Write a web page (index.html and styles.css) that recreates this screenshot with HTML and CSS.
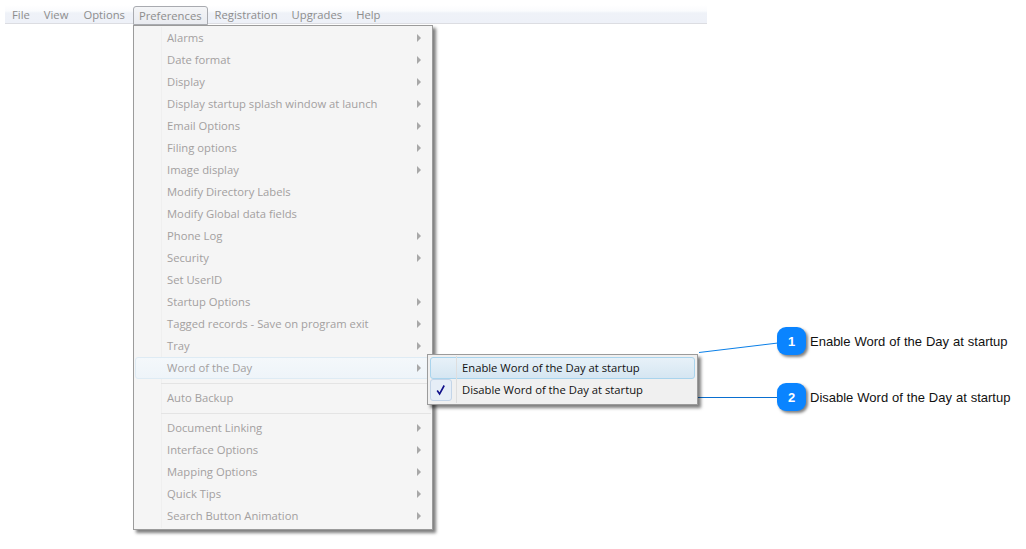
FILE: index.html
```
<!DOCTYPE html>
<html lang="en">
<head>
<meta charset="utf-8">
<title>Preferences menu</title>
<link rel="stylesheet" href="styles.css">
</head>
<body>
<div class="stage">
  <nav class="menubar">
    <span class="bar-item">File</span>
    <span class="bar-item bar-view">View</span>
    <span class="bar-item">Options</span>
    <span class="bar-item bar-active">Preferences</span>
    <span class="bar-item">Registration</span>
    <span class="bar-item">Upgrades</span>
    <span class="bar-item">Help</span>
  </nav>

  <div class="menu main-menu">
    <div class="row has-sub">Alarms</div>
    <div class="row has-sub">Date format</div>
    <div class="row has-sub">Display</div>
    <div class="row has-sub">Display startup splash window at launch</div>
    <div class="row has-sub">Email Options</div>
    <div class="row has-sub">Filing options</div>
    <div class="row has-sub">Image display</div>
    <div class="row">Modify Directory Labels</div>
    <div class="row">Modify Global data fields</div>
    <div class="row has-sub">Phone Log</div>
    <div class="row has-sub">Security</div>
    <div class="row">Set UserID</div>
    <div class="row has-sub">Startup Options</div>
    <div class="row has-sub">Tagged records - Save on program exit</div>
    <div class="row has-sub">Tray</div>
    <div class="row has-sub row-hover">Word of the Day</div>
    <div class="sep"></div>
    <div class="row">Auto Backup</div>
    <div class="sep"></div>
    <div class="row has-sub">Document Linking</div>
    <div class="row has-sub">Interface Options</div>
    <div class="row has-sub">Mapping Options</div>
    <div class="row has-sub">Quick Tips</div>
    <div class="row has-sub">Search Button Animation</div>
  </div>

  <div class="menu sub-menu">
    <div class="row row-on">Enable Word of the Day at startup</div>
    <div class="row row-plain">
      <span class="check"><svg width="10" height="12" viewBox="0 0 10 12"><path d="M1.2 6.5 L3.6 10 L8.2 1.5" fill="none" stroke="#10108a" stroke-width="1.6"/></svg></span>
      Disable Word of the Day at startup
    </div>
  </div>

  <svg class="leaders" width="1026" height="549" viewBox="0 0 1026 549">
    <path d="M699 352.5 L778 343" stroke="#0a7fe8" stroke-width="1" fill="none"/>
    <path d="M697 397.5 L778 397.5" stroke="#0a6fd0" stroke-width="1" fill="none"/>
  </svg>

  <div class="callout callout-one">
    <span class="bubble">1</span>
    <span class="callout-text">Enable Word of the Day at startup</span>
  </div>
  <div class="callout callout-two">
    <span class="bubble">2</span>
    <span class="callout-text">Disable Word of the Day at startup</span>
  </div>
</div>
</body>
</html>
```

FILE: styles.css
```
html, body {
  margin: 0;
  padding: 0;
  background: #fff;
}
.stage {
  position: relative;
  width: 1026px;
  height: 549px;
  overflow: hidden;
  font-family: "Open Sans", "Noto Sans", sans-serif;
  font-size: 11.25px;
}
.menubar {
  position: absolute;
  left: 5px;
  top: 5px;
  width: 702px;
  height: 19px;
  box-sizing: border-box;
  display: flex;
  align-items: stretch;
  background: linear-gradient(#ffffff 0, #fafbfd 6px, #eff2f8 8px, #eef1f8 17px);
  border-bottom: 1px solid #dcdde2;
  color: #8d8d8d;
}
.bar-item {
  padding: 0 7px;
  line-height: 19px;
  white-space: nowrap;
}
.bar-view {
  padding-right: 8px;
}
.bar-active {
  position: relative;
  height: 19px;
  box-sizing: border-box;
  line-height: 17px;
  padding: 0 5px;
  margin: 1px 0 0 1px;
  border: 1px solid #a9abb0;
  border-radius: 3px 3px 0 0;
  background: linear-gradient(#f4f5f7, #e9ebf0);
  z-index: 3;
}
.menu {
  position: absolute;
  box-sizing: border-box;
  border: 1px solid #9b9b9b;
  box-shadow: 3px 3px 3px rgba(0, 0, 0, .5);
  background: #f5f5f5;
}
.main-menu {
  left: 133px;
  top: 25px;
  width: 300px;
  height: 505px;
  padding: 1px 1px 0;
  color: #a3a0a0;
  z-index: 1;
}
.main-menu::before,
.sub-menu::before {
  content: "";
  position: absolute;
  left: 27px;
  top: 1px;
  bottom: 1px;
  border-left: 1px solid #efefef;
}
.row {
  position: relative;
  height: 22px;
  line-height: 21px;
  padding-left: 32px;
  box-sizing: border-box;
  white-space: nowrap;
}
.has-sub::after {
  content: "";
  position: absolute;
  right: 10px;
  top: 7px;
  border-left: 4px solid #a8a8a8;
  border-top: 4px solid transparent;
  border-bottom: 4px solid transparent;
}
.row-hover {
  margin-right: -5px;
  background: linear-gradient(#f4f8fb, #eef4f9);
  border: 1px solid #deebf4;
  border-radius: 3px;
  line-height: 19px;
  padding-left: 31px;
}
.row-hover::after {
  right: 14px;
  top: 6px;
}
.sep {
  height: 8px;
  margin-left: 26px;
  box-sizing: border-box;
  border-bottom: 1px solid #e4e4e4;
  border-top: 3px solid transparent;
  position: relative;
  top: -3px;
}
.sub-menu {
  left: 427px;
  top: 354px;
  width: 271px;
  height: 51px;
  padding: 2px 2px 0;
  background: #f0f0f0;
  color: #111;
  z-index: 2;
}
.sub-menu::before {
  left: 28px;
  z-index: 2;
  border-left-color: #dedede;
}
.sub-menu .row {
  padding-left: 32px;
}
.row-on {
  background: linear-gradient(#e7f1f8, #d5e6f2);
  border: 1px solid #a9d4ed;
  border-radius: 3px;
  line-height: 20px;
}
.sub-menu .row-on {
  padding-left: 31px;
}
.check {
  position: absolute;
  left: 0;
  top: 0;
  width: 22px;
  height: 22px;
  box-sizing: border-box;
  display: flex;
  align-items: center;
  justify-content: center;
  background: #e6eef7;
  border: 1px solid #c4d5e8;
  border-radius: 3px;
}
.leaders {
  position: absolute;
  left: 0;
  top: 0;
  z-index: 0;
}
.callout {
  position: absolute;
  left: 777px;
  display: flex;
  align-items: center;
  gap: 4px;
  z-index: 3;
}
.callout-one { top: 327px; }
.callout-two { top: 383px; }
.bubble {
  width: 29px;
  height: 28px;
  display: flex;
  align-items: center;
  justify-content: center;
  border-radius: 9px;
  background: #0a84ff;
  box-shadow: 2px 2px 3px rgba(0, 0, 0, .5);
  color: #fff;
  font: bold 13px "Liberation Sans", Arial, sans-serif;
}
.callout-text {
  font: 13px "Liberation Sans", Arial, sans-serif;
  word-spacing: .33px;
  color: #111;
  white-space: nowrap;
}
```
